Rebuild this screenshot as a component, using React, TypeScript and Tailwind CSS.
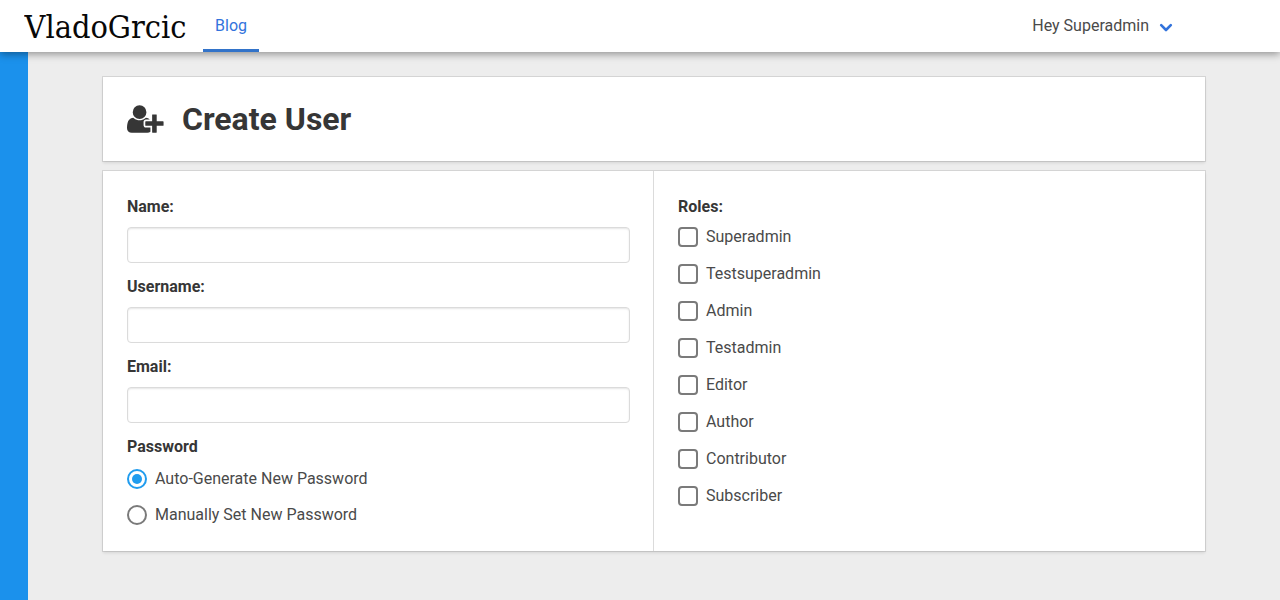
import { useState } from "react";

const roles = ["Superadmin", "Testsuperadmin", "Admin", "Testadmin", "Editor", "Author", "Contributor", "Subscriber"];

function UserPlus() {
  return (
    <svg viewBox="0 0 2048 1792" className="h-8 w-[36.57px]" fill="currentColor" aria-hidden="true">
      <path d="M704 896q-159 0-271.5-112.5t-112.5-271.5 112.5-271.5 271.5-112.5 271.5 112.5 112.5 271.5-112.5 271.5-271.5 112.5zm960 128h352q13 0 22.5 9.5t9.5 22.5v192q0 13-9.5 22.5t-22.5 9.5h-352v352q0 13-9.5 22.5t-22.5 9.5h-192q-13 0-22.5-9.5t-9.5-22.5v-352h-352q-13 0-22.5-9.5t-9.5-22.5v-192q0-13 9.5-22.5t22.5-9.5h352v-352q0-13 9.5-22.5t22.5-9.5h192q13 0 22.5 9.5t9.5 22.5v352zm-736 224q0 52 38 90t90 38h256v238q-68 50-171 50h-874q-121 0-194-69t-73-190q0-53 3.5-103.5t14-109 26.5-108.5 43-97.5 62-81 85.5-53.5 111.5-20q19 0 39 17 79 61 154.5 91.5t164.5 30.5 164.5-30.5 154.5-91.5q20-17 39-17 132 0 217 96h-223q-52 0-90 38t-38 90v192z" />
    </svg>
  );
}

function Field({ label }: { label: string }) {
  return (
    <label className="mb-3 block">
      <span className="mb-2 block font-bold leading-6 text-[#363636]">{label}</span>
      <input className="block h-9 w-full rounded-[4px] border border-[#dbdbdb] bg-white px-3 shadow-[inset_0_1px_2px_rgba(10,10,10,0.1)] outline-none focus:border-[#3273dc]" />
    </label>
  );
}

export default function App() {
  const [auto, setAuto] = useState(true);
  const [picked, setPicked] = useState<string[]>([]);
  const toggle = (r: string) => setPicked(picked.includes(r) ? picked.filter((p) => p !== r) : [...picked, r]);

  return (
    <div className="flex h-[600px] flex-col overflow-hidden bg-[#ededed] font-['Roboto',sans-serif] text-base text-[#4a4a4a]">
      <nav className="relative z-10 flex h-[52px] shrink-0 bg-white shadow-[0_2px_8px_rgba(0,0,0,0.4)]">
        <a className="flex w-[203px] items-center pl-6">
          <svg viewBox="0 0 164 40" className="h-10 w-[164px]" role="img" aria-label="VladoGrcic">
            <text x="0.5" y="31.6" textLength="162" lengthAdjust="spacingAndGlyphs" fill="#080808" className="font-['DejaVu_Serif_Condensed','DejaVu_Serif',serif] text-[31px]">
              VladoGrcic
            </text>
          </svg>
        </a>
        <a className="flex h-[52px] w-14 items-center justify-center border-b-[3px] border-[#3273c9] pt-0.5 text-[#3273dc]">Blog</a>
        <button className="mr-[107px] ml-auto flex items-center">
          <span>Hey Superadmin</span>
          <svg viewBox="0 0 14 10" className="mt-1 ml-2.5 h-2.5 w-3.5" fill="none" stroke="#3273dc" strokeWidth="2.6" strokeLinecap="round" strokeLinejoin="round">
            <path d="m2.2 2.2 4.8 4.8 4.8-4.8" />
          </svg>
        </button>
      </nav>

      <div className="flex flex-1">
        <aside className="w-7 shrink-0 bg-[#1b91ec]" />
        <main className="ml-[75px] w-[1102px] pt-[25px]">
          <header className="flex h-[84px] items-center bg-white px-6 text-[#363636] shadow-[0_2px_3px_rgba(10,10,10,0.1),0_0_0_1px_rgba(10,10,10,0.1)]">
            <UserPlus />
            <h1 className="ml-[18.4px] text-[32px] font-bold leading-9">Create User</h1>
          </header>

          <section className="mt-2.5 flex h-[380px] bg-white shadow-[0_2px_3px_rgba(10,10,10,0.1),0_0_0_1px_rgba(10,10,10,0.1)]">
            <div className="w-[551px] border-r border-[#dbdbdb] px-6 pt-6 pr-[23px]">
              <Field label="Name:" />
              <Field label="Username:" />
              <Field label="Email:" />
              <p className="mb-2 font-bold leading-6 text-[#363636]">Password</p>
              {["Auto-Generate New Password", "Manually Set New Password"].map((text, i) => {
                const on = auto === (i === 0);
                return (
                  <button key={text} role="radio" aria-checked={on} onClick={() => setAuto(i === 0)} className="mb-3 flex h-6 items-center gap-2">
                    <span className={`flex size-5 items-center justify-center rounded-full border-2 ${on ? "border-[#209cee]" : "border-[#7a7a7a]"}`}>
                      {on && <span className="size-2.5 rounded-full bg-[#209cee]" />}
                    </span>
                    <span>{text}</span>
                  </button>
                );
              })}
            </div>
            <div className="pt-6 pl-6">
              <p className="mb-1.5 font-bold leading-6 text-[#363636]">Roles:</p>
              {roles.map((r) => (
                <button key={r} role="checkbox" aria-checked={picked.includes(r)} onClick={() => toggle(r)} className="mb-[13px] flex h-6 items-center gap-2">
                  <span className={`size-5 rounded-[4px] border-2 ${picked.includes(r) ? "border-[#209cee] bg-[#209cee]" : "border-[#7a7a7a]"}`} />
                  <span>{r}</span>
                </button>
              ))}
            </div>
          </section>
        </main>
      </div>
    </div>
  );
}
